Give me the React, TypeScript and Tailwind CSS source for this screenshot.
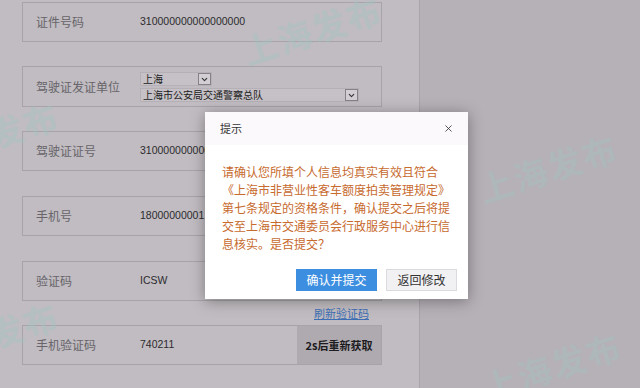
import { ChevronDown, X } from "lucide-react";

const cjk = { fontFamily: '"Noto Sans CJK SC", "Noto Sans", sans-serif' };
const latin = { fontFamily: '"Liberation Sans", "Noto Sans CJK SC", sans-serif' };

function Select({ text, width }: { text: string; width: string }) {
  return (
    <div className={`flex h-[14px] items-center justify-between border border-[#b4b0b5] bg-[#c5c1c6] pl-[2px] ${width}`}>
      <span className="text-[10px] leading-none text-[#222]">{text}</span>
      <span className="flex h-[12px] w-[13px] items-center justify-center border border-[#858187] bg-[#d2ced3]">
        <ChevronDown size={9} strokeWidth={3} className="text-[#333]" />
      </span>
    </div>
  );
}

function Row({ label, children, className = "" }: { label: string; children?: React.ReactNode; className?: string }) {
  return (
    <div className={`flex h-[40px] items-center border border-[#a7a3a8] ${className}`}>
      <div className="w-[117px] shrink-0 pl-[13px] text-[12px] text-[#67646a]" style={cjk}>
        {label}
      </div>
      {children}
    </div>
  );
}

function Value({ text }: { text: string }) {
  return (
    <span className="text-[10.5px] text-[#2d2b2e]" style={latin}>
      {text}
    </span>
  );
}

function Watermark({ className }: { className: string }) {
  return (
    <span
      className={`pointer-events-none absolute -rotate-[18deg] whitespace-nowrap text-[34px] font-bold tracking-[2px] text-[#a3c4c2] opacity-40 ${className}`}
      style={cjk}
    >
      上海发布
    </span>
  );
}

export default function App() {
  return (
    <div className="relative flex h-[388px] w-[640px] overflow-hidden" style={cjk}>
      <div className="w-[420px] shrink-0 border-r border-[#a9a4aa] bg-[#c0bcc1] pl-[22px] pt-[2px]">
        <div className="flex w-[360px] flex-col">
          <Row label="证件号码">
            <Value text="310000000000000000" />
          </Row>
          <Row label="驾驶证发证单位" className="mt-[24px] h-[41px]">
            <div className="flex flex-col gap-[2px] pt-[1px]">
              <Select text="上海" width="w-[72px]" />
              <Select text="上海市公安局交通警察总队" width="w-[219px]" />
            </div>
          </Row>
          <Row label="驾驶证证号" className="mt-[24px]">
            <Value text="310000000000000000" />
          </Row>
          <Row label="手机号" className="mt-[25px]">
            <Value text="18000000001" />
          </Row>
          <Row label="验证码" className="mt-[25px]">
            <Value text="ICSW" />
          </Row>
          <div className="flex h-[24px] items-center justify-end pr-[13px]">
            <span className="text-[11px] text-[#3d6eb3] underline">刷新验证码</span>
          </div>
          <Row label="手机验证码">
            <Value text="740211" />
            <div className="ml-auto flex h-full w-[84px] items-center justify-center bg-[#aeaaaf] text-[11px] font-bold text-[#1c1b1d]">
              2s后重新获取
            </div>
          </Row>
        </div>
      </div>
      <div className="flex-1 bg-[#b6b0b7]" />

      <Watermark className="left-[240px] top-[4px]" />
      <Watermark className="-left-[83px] top-[110px]" />
      <Watermark className="left-[476px] top-[142px]" />
      <Watermark className="-left-[83px] top-[310px]" />
      <Watermark className="left-[480px] top-[340px]" />

      <div className="absolute left-[205px] top-[112px] flex h-[187px] w-[263px] flex-col bg-white shadow-[0_2px_14px_rgba(0,0,0,0.35)]">
        <div className="flex h-[33px] items-center justify-between bg-[#fcf9fc] pl-[15px] pr-[14px]">
          <span className="text-[11px] text-[#333]">提示</span>
          <X size={11} strokeWidth={1.8} className="text-[#333]" />
        </div>
        <div className="flex-1 pl-[17px] pt-[18px] text-[12px] leading-[18px] text-[#c76a2e]">
          请确认您所填个人信息均真实有效且符合
          <br />
          《上海市非营业性客车额度拍卖管理规定》
          <br />
          第七条规定的资格条件，确认提交之后将提
          <br />
          交至上海市交通委员会行政服务中心进行信
          <br />
          息核实。是否提交？
        </div>
        <div className="flex justify-end gap-[9px] pb-[8px] pr-[11px]">
          <button className="h-[22px] w-[81px] bg-[#3c8ee0] text-[12px] text-white">确认并提交</button>
          <button className="h-[22px] w-[71px] border border-[#dcdade] bg-[#f1f0f2] text-[12px] text-[#333]">
            返回修改
          </button>
        </div>
      </div>
    </div>
  );
}
